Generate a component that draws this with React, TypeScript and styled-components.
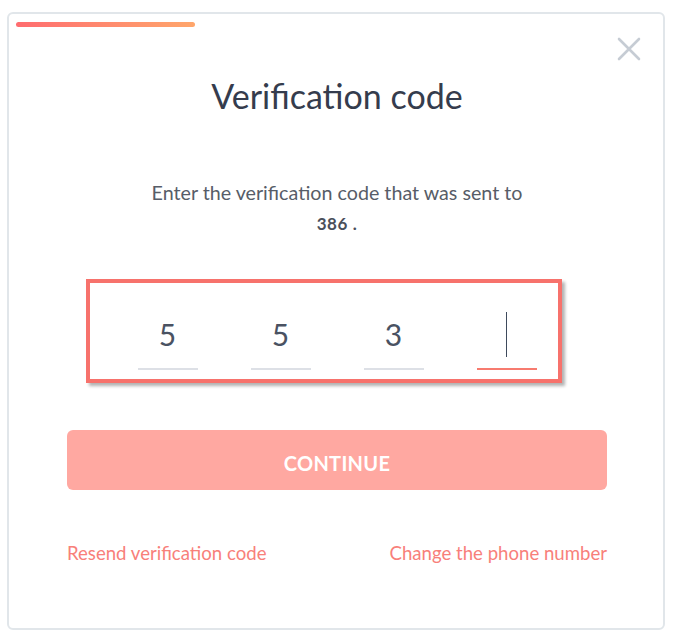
import React from "react";
import styled, { createGlobalStyle } from "styled-components";

const Global = createGlobalStyle`
  html, body { margin: 0; padding: 0; background: #ffffff; }
  body { font-family: Lato, "Noto Sans", "Liberation Sans", sans-serif; }
  * { box-sizing: border-box; }
`;

const Page = styled.div`
  padding: 12px 0 0 7px;
`;

const Card = styled.div`
  position: relative;
  width: 658px;
  height: 618px;
  border: 2px solid #e1e6ea;
  border-radius: 6px;
  background: #fff;
  padding: 8px 6px 0 8px;
  display: flex;
  flex-direction: column;
  align-items: center;
`;

const Progress = styled.div`
  align-self: flex-start;
  margin-left: -1px;
  width: 179px;
  height: 5px;
  border-radius: 3px;
  background: linear-gradient(90deg, #ff6c6f 0%, #ff8a6e 50%, #ffa66b 100%);
`;

const Close = styled.button`
  position: absolute;
  top: 23px;
  right: 22px;
  width: 24px;
  height: 24px;
  padding: 0;
  border: 0;
  background: none;
  cursor: pointer;
  display: flex;
`;

const Title = styled.h1`
  margin: 49px 0 0;
  font-size: 34px;
  line-height: 40px;
  font-weight: 400;
  color: #353c4d;
`;

const Text = styled.p`
  margin: 62px 0 0;
  font-size: 19.7px;
  line-height: 30px;
  color: #575d68;
  text-align: center;
`;

const Phone = styled.b`
  font-size: 17px;
  font-weight: 700;
  color: #4a505b;
  letter-spacing: 0.6px;
`;

const CodeRow = styled.div`
  position: relative;
  margin-top: 61px;
  display: flex;
  gap: 53px;
`;

const Highlight = styled.div`
  position: absolute;
  left: -52px;
  top: -21px;
  width: 476px;
  height: 104px;
  border: 4px solid #f7726c;
  box-shadow: 3px 3px 3px rgba(0, 0, 0, 0.3);
  pointer-events: none;
`;

const Cell = styled.div<{ $active?: boolean }>`
  width: 60px;
  height: 70px;
  border-bottom: 2px solid ${(p) => (p.$active ? "#f77b6f" : "#dde0e6")};
  display: flex;
  align-items: center;
  justify-content: center;
  font-size: 30px;
  color: #4a5262;
`;

const Caret = styled.span`
  display: block;
  width: 1.5px;
  height: 45px;
  background: #3e4a5c;
`;

const Button = styled.button`
  margin-top: 60px;
  width: 540px;
  height: 60px;
  padding: 5px 0 0;
  border: 0;
  border-radius: 6px;
  background: #ffa8a1;
  color: #fff;
  font-family: inherit;
  font-size: 20px;
  font-weight: 700;
  letter-spacing: 0.3px;
  cursor: pointer;
`;

const Links = styled.div`
  margin-top: 51px;
  width: 540px;
  display: flex;
  justify-content: space-between;
`;

const Link = styled.a`
  font-size: 18.6px;
  line-height: 24px;
  color: #f8807a;
  text-decoration: none;
  cursor: pointer;
`;

export default function App() {
  const digits = ["5", "5", "3", ""];
  return (
    <>
      <Global />
      <Page>
        <Card>
          <Progress />
          <Close aria-label="Close">
            <svg width="24" height="24" viewBox="0 0 24 24">
              <path
                d="M2 2 L22 22 M22 2 L2 22"
                stroke="#c6ccd4"
                strokeWidth="2.6"
                strokeLinecap="round"
              />
            </svg>
          </Close>
          <Title>Verification code</Title>
          <Text>
            Enter the verification code that was sent to
            <br />
            <Phone>386 .</Phone>
          </Text>
          <CodeRow>
            <Highlight />
            {digits.map((d, i) => (
              <Cell key={i} $active={i === 3}>
                {i === 3 ? <Caret /> : d}
              </Cell>
            ))}
          </CodeRow>
          <Button>CONTINUE</Button>
          <Links>
            <Link>Resend verification code</Link>
            <Link>Change the phone number</Link>
          </Links>
        </Card>
      </Page>
    </>
  );
}
